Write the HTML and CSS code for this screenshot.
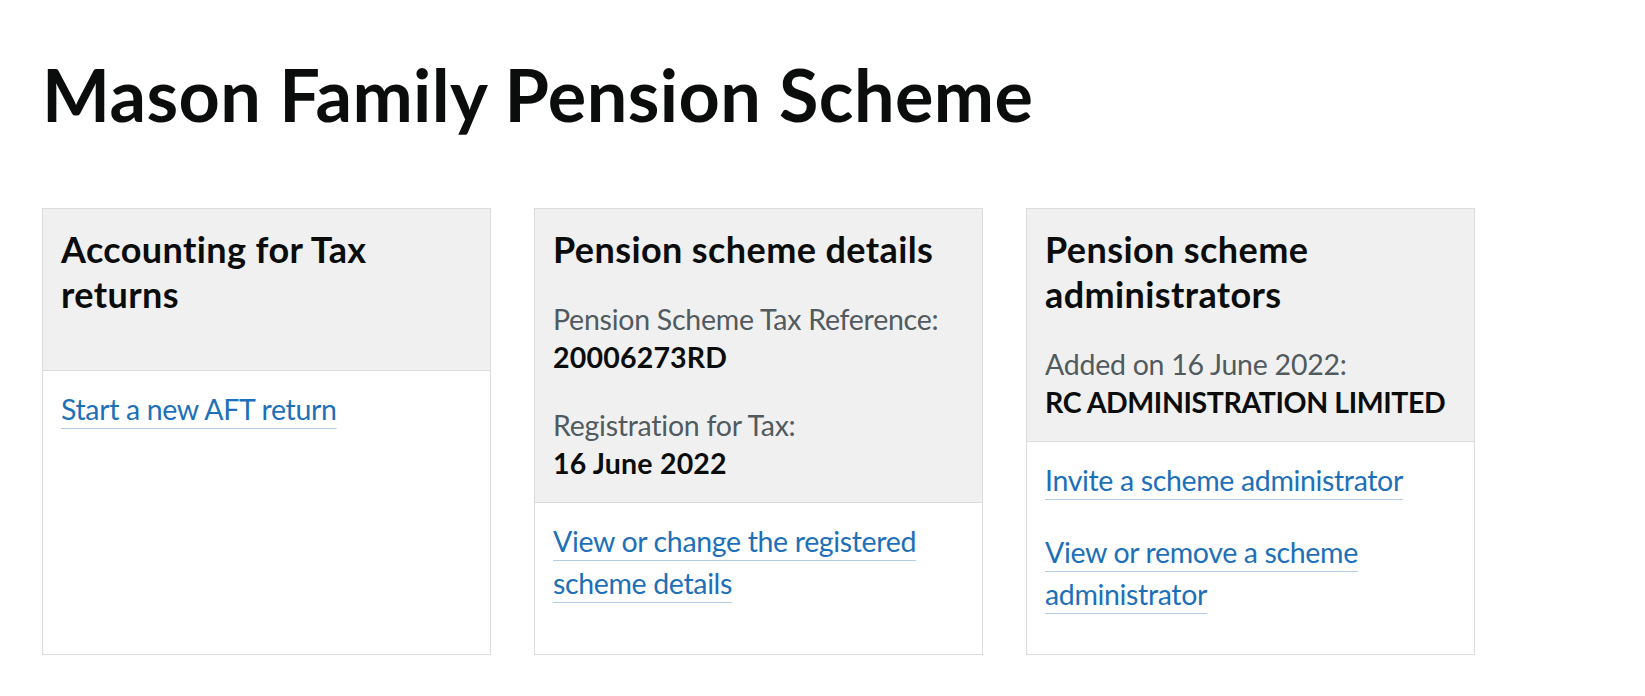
FILE: index.html
```html
<!DOCTYPE html>
<html lang="en">
<head>
<meta charset="utf-8">
<title>Mason Family Pension Scheme</title>
<link rel="stylesheet" href="styles.css">
</head>
<body>
<main class="page">
  <h1 class="page__title">Mason Family Pension Scheme</h1>
  <div class="cards">
    <section class="card">
      <div class="card__header">
        <h2 class="card__heading card__heading--solo">Accounting for Tax returns</h2>
      </div>
      <div class="card__body">
        <ul class="card__links">
          <li><a class="link" href="#">Start a new AFT return</a></li>
        </ul>
      </div>
    </section>
    <section class="card">
      <div class="card__header">
        <h2 class="card__heading">Pension scheme details</h2>
        <p class="card__meta">Pension Scheme Tax Reference:<br><strong class="card__value">20006273RD</strong></p>
        <p class="card__meta">Registration for Tax:<br><strong class="card__value">16 June 2022</strong></p>
      </div>
      <div class="card__body">
        <ul class="card__links">
          <li><a class="link" href="#">View or change the registered scheme details</a></li>
        </ul>
      </div>
    </section>
    <section class="card">
      <div class="card__header">
        <h2 class="card__heading">Pension scheme administrators</h2>
        <p class="card__meta">Added on 16 June 2022:<br><strong class="card__value card__value--caps">RC ADMINISTRATION LIMITED</strong></p>
      </div>
      <div class="card__body">
        <ul class="card__links">
          <li><a class="link" href="#">Invite a scheme administrator</a></li>
          <li><a class="link" href="#">View or remove a scheme administrator</a></li>
        </ul>
      </div>
    </section>
  </div>
</main>
</body>
</html>
```
FILE: styles.css
```css
html, body {
  margin: 0;
  padding: 0;
  background: #ffffff;
}

body {
  font-family: Lato, "Noto Sans", Arial, sans-serif;
  color: #0b0c0c;
}

.page {
  padding: 57px 0 0 42px;
}

.page__title {
  margin: 0 0 76px 0;
  font-size: 72px;
  line-height: 75px;
  font-weight: 700;
  letter-spacing: 0.4px;
  color: #0b0c0c;
}

.cards {
  display: grid;
  grid-template-columns: repeat(3, 449px);
  column-gap: 43px;
  align-items: stretch;
}

.card {
  display: flex;
  flex-direction: column;
  border: 1px solid #dcdcdc;
  height: 447px;
  box-sizing: border-box;
}

.card__header {
  background: #f0f0f0;
  border-bottom: 1px solid #dcdcdc;
  padding: 18px 18px 20px 18px;
}

.card__heading {
  margin: 0 0 28px 0;
  font-size: 36px;
  line-height: 45px;
  font-weight: 700;
  letter-spacing: 0.4px;
  color: #0b0c0c;
}

.card__heading--solo {
  margin-bottom: 33px;
}

.card__meta {
  margin: 0 0 30px 0;
  font-size: 28.5px;
  line-height: 38px;
  letter-spacing: -0.25px;
  color: #505a5f;
}

.card__meta:last-child {
  margin-bottom: 0;
}

.card__value {
  font-weight: 700;
  letter-spacing: 0.2px;
  color: #0b0c0c;
}

.card__value--caps {
  letter-spacing: -0.4px;
}

.card__body {
  padding: 17px 18px 9px 18px;
}

.card__links {
  list-style: none;
  margin: 0;
  padding: 0;
}

.card__links li {
  margin: 0 0 30px 0;
  font-size: 28.5px;
  line-height: 42px;
  letter-spacing: -0.35px;
}

.link {
  color: #1d70b8;
  text-decoration: underline;
  text-decoration-color: #b4cde6;
  text-decoration-thickness: 1px;
  text-underline-offset: 8px;
}
```
